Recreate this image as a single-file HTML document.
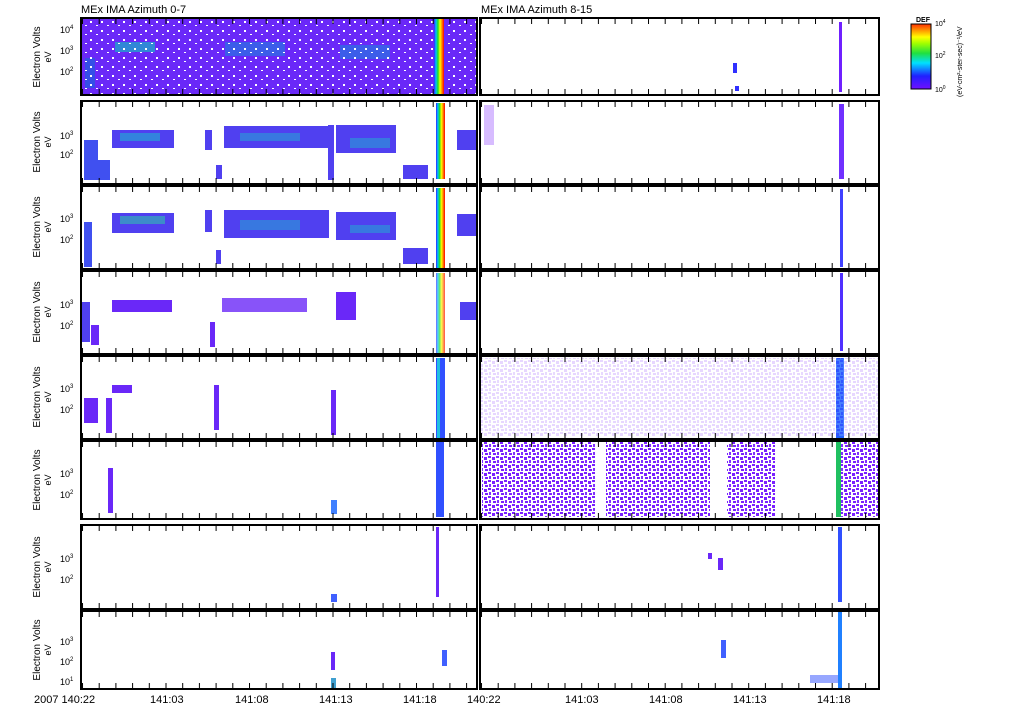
<!DOCTYPE html>
<html><head><meta charset="utf-8"><style>
html,body{margin:0;padding:0;background:#fff;}
svg{display:block;font-family:"Liberation Sans",sans-serif;}
</style></head><body>
<svg width="1024" height="708" viewBox="0 0 1024 708" xmlns="http://www.w3.org/2000/svg">
<defs>
<linearGradient id="rb" x1="0" y1="0" x2="1" y2="0">
<stop offset="0" stop-color="#3020ff"/><stop offset="0.2" stop-color="#00c0ff"/><stop offset="0.4" stop-color="#20e020"/><stop offset="0.6" stop-color="#ffff00"/><stop offset="0.8" stop-color="#ff8000"/><stop offset="1" stop-color="#ff0000"/>
</linearGradient>
<linearGradient id="cb" x1="0" y1="1" x2="0" y2="0">
<stop offset="0" stop-color="#7010ff"/><stop offset="0.2" stop-color="#2020ff"/><stop offset="0.4" stop-color="#00e0ff"/><stop offset="0.55" stop-color="#20e040"/><stop offset="0.7" stop-color="#a0ff00"/><stop offset="0.8" stop-color="#ffff00"/><stop offset="1" stop-color="#ff3000"/>
</linearGradient>
<pattern id="tk" x="82" y="0" width="16.7" height="700" patternUnits="userSpaceOnUse">
<rect x="0" y="0" width="1" height="700" fill="#000"/>
</pattern>
<pattern id="dots" x="0" y="0" width="8" height="8" patternUnits="userSpaceOnUse">
<rect width="8" height="8" fill="#fff"/>
<rect x="0" y="0" width="3" height="2" fill="#7a20ff"/><rect x="4" y="1" width="3" height="3" fill="#7a20ff"/>
<rect x="1" y="4" width="2" height="3" fill="#8030ff"/><rect x="5" y="5" width="3" height="2" fill="#7a20ff"/>
</pattern>
<pattern id="wsp" x="0" y="0" width="11" height="9" patternUnits="userSpaceOnUse">
<rect x="2" y="3" width="2" height="2" fill="#fff"/><rect x="8" y="7" width="2" height="1" fill="#fff"/>
</pattern>
</defs>

<text x="81" y="13" font-size="11">MEx IMA Azimuth 0-7</text>
<text x="481" y="13" font-size="11">MEx IMA Azimuth 8-15</text>

<!-- Row 1 -->
<g>
<rect x="82" y="19" width="395" height="75" fill="#6a28f8"/>
<rect x="115" y="42" width="40" height="10" fill="#1ab0c8" opacity="0.7"/>
<rect x="225" y="42" width="60" height="14" fill="#1e80e0" opacity="0.6"/>
<rect x="340" y="45" width="50" height="14" fill="#1e80e0" opacity="0.6"/>
<rect x="85" y="58" width="10" height="30" fill="#2060e0" opacity="0.7"/>
<rect x="82" y="19" width="395" height="75" fill="url(#wsp)"/>
<rect x="180" y="20" width="20" height="74" fill="url(#wsp)"/>
<rect x="300" y="20" width="25" height="74" fill="url(#wsp)"/>
<rect x="434" y="19" width="10" height="75" fill="url(#rb)"/>
<rect x="481" y="19" width="397" height="75" fill="#fff"/>
<rect x="733" y="63" width="4" height="10" fill="#3030ff"/>
<rect x="735" y="86" width="4" height="5" fill="#3030ff"/>
<rect x="839" y="22" width="3" height="70" fill="#7020ff"/>
</g>
<!-- Row 2 -->
<g>
<rect x="112" y="130" width="62" height="18" fill="#5040f0"/><rect x="120" y="133" width="40" height="8" fill="#20b0d0" opacity=".6"/>
<rect x="224" y="126" width="105" height="22" fill="#5040f0"/><rect x="240" y="133" width="60" height="8" fill="#20b0d0" opacity=".5"/>
<rect x="336" y="125" width="60" height="28" fill="#5040f0"/><rect x="350" y="138" width="40" height="10" fill="#20b0d0" opacity=".5"/>
<rect x="84" y="140" width="14" height="40" fill="#4050f0"/>
<rect x="96" y="160" width="14" height="20" fill="#4050f0"/>
<rect x="403" y="165" width="25" height="14" fill="#5040f0"/>
<rect x="205" y="130" width="7" height="20" fill="#5040f0"/>
<rect x="216" y="165" width="6" height="14" fill="#5040f0"/>
<rect x="328" y="125" width="6" height="55" fill="#5040f0"/>
<rect x="457" y="130" width="20" height="20" fill="#5040f0"/>
<rect x="436" y="103" width="9" height="76" fill="url(#rb)"/>
<rect x="484" y="105" width="10" height="40" fill="#7a20ff" opacity=".3"/>
<rect x="839" y="104" width="5" height="75" fill="#7030ff"/>
</g>
<!-- Row 3 -->
<g>
<rect x="112" y="213" width="62" height="20" fill="#5040f0"/><rect x="120" y="216" width="45" height="8" fill="#30c0b0" opacity=".6"/>
<rect x="224" y="210" width="105" height="28" fill="#5040f0"/><rect x="240" y="220" width="60" height="10" fill="#20b0d0" opacity=".5"/>
<rect x="336" y="212" width="60" height="28" fill="#5040f0"/><rect x="350" y="225" width="40" height="8" fill="#20b0d0" opacity=".5"/>
<rect x="84" y="222" width="8" height="45" fill="#4050f0"/>
<rect x="205" y="210" width="7" height="22" fill="#5040f0"/>
<rect x="216" y="250" width="5" height="14" fill="#5040f0"/>
<rect x="403" y="248" width="25" height="16" fill="#5040f0"/>
<rect x="457" y="214" width="20" height="22" fill="#5040f0"/>
<rect x="436" y="188" width="9" height="80" fill="url(#rb)"/>
<rect x="840" y="189" width="3" height="78" fill="#4040ff"/>
</g>
<!-- Row 4 -->
<g>
<rect x="112" y="300" width="60" height="12" fill="#6a28f8"/>
<rect x="222" y="298" width="85" height="14" fill="#6a28f8" opacity=".8"/>
<rect x="336" y="292" width="20" height="28" fill="#6a28f8"/>
<rect x="82" y="302" width="8" height="40" fill="#5040f0"/>
<rect x="91" y="325" width="8" height="20" fill="#6a28f8"/>
<rect x="210" y="322" width="5" height="25" fill="#6a28f8"/>
<rect x="436" y="273" width="9" height="80" fill="url(#rb)" opacity=".7"/>
<rect x="460" y="302" width="17" height="18" fill="#5040f0"/>
<rect x="840" y="273" width="3" height="78" fill="#5030ff"/>
</g>
<!-- Row 5 -->
<g>
<rect x="112" y="385" width="20" height="8" fill="#6a28f8"/>
<rect x="84" y="398" width="14" height="25" fill="#6a28f8"/>
<rect x="106" y="398" width="6" height="35" fill="#6a28f8"/>
<rect x="214" y="385" width="5" height="45" fill="#6a28f8"/>
<rect x="331" y="390" width="5" height="45" fill="#6a28f8"/>
<rect x="436" y="358" width="9" height="80" fill="#3050ff"/>
<rect x="437" y="358" width="3" height="80" fill="#20c0e0"/>
<rect x="836" y="358" width="8" height="80" fill="#2060ff"/>
<rect x="481" y="358" width="397" height="78" fill="url(#dots)" opacity=".18"/>
</g>
<!-- Row 6 -->
<g>
<rect x="482" y="442" width="114" height="75" fill="url(#dots)"/>
<rect x="606" y="442" width="104" height="75" fill="url(#dots)"/>
<rect x="727" y="442" width="48" height="75" fill="url(#dots)"/>
<rect x="837" y="442" width="42" height="75" fill="url(#dots)"/>
<rect x="836" y="442" width="5" height="75" fill="#20c060"/>
<rect x="108" y="468" width="5" height="45" fill="#6a28f8"/>
<rect x="331" y="500" width="6" height="14" fill="#4080ff"/>
<rect x="436" y="442" width="8" height="75" fill="#3050ff"/>
</g>
<!-- Row 7 -->
<g>
<rect x="436" y="527" width="3" height="70" fill="#6a28f8"/>
<rect x="331" y="594" width="6" height="8" fill="#4060ff"/>
<rect x="838" y="527" width="4" height="75" fill="#3050ff"/>
<rect x="708" y="553" width="4" height="6" fill="#6a28f8"/>
<rect x="718" y="558" width="5" height="12" fill="#6a28f8"/>
</g>
<!-- Row 8 -->
<g>
<rect x="331" y="652" width="4" height="18" fill="#6a28f8"/>
<rect x="331" y="678" width="5" height="10" fill="#40a0d0"/>
<rect x="442" y="650" width="5" height="16" fill="#4060ff"/>
<rect x="721" y="640" width="5" height="18" fill="#4060ff"/>
<rect x="810" y="675" width="28" height="8" fill="#3050ff" opacity=".5"/>
<rect x="838" y="612" width="4" height="76" fill="#2080ff"/>
</g>

<!-- Frames -->
<g fill="none" stroke="#000" stroke-width="2">
<rect x="81" y="18" width="396" height="77"/><rect x="480" y="18" width="399" height="77"/>
<rect x="81" y="101" width="396" height="83"/><rect x="480" y="101" width="399" height="83"/>
<rect x="81" y="186" width="396" height="83"/><rect x="480" y="186" width="399" height="83"/>
<rect x="81" y="271" width="396" height="83"/><rect x="480" y="271" width="399" height="83"/>
<rect x="81" y="356" width="396" height="83"/><rect x="480" y="356" width="399" height="83"/>
<rect x="81" y="441" width="396" height="78"/><rect x="480" y="441" width="399" height="78"/>
<rect x="81" y="525" width="396" height="84"/><rect x="480" y="525" width="399" height="84"/>
<rect x="81" y="611" width="396" height="78"/><rect x="480" y="611" width="399" height="78"/>
</g>
<!-- tick bands -->
<g fill="url(#tk)">
<rect x="82" y="19" width="395" height="5"/><rect x="82" y="89" width="395" height="5"/>
<rect x="82" y="102" width="395" height="5"/><rect x="82" y="178" width="395" height="5"/>
<rect x="82" y="187" width="395" height="5"/><rect x="82" y="263" width="395" height="5"/>
<rect x="82" y="272" width="395" height="5"/><rect x="82" y="348" width="395" height="5"/>
<rect x="82" y="357" width="395" height="5"/><rect x="82" y="433" width="395" height="5"/>
<rect x="82" y="442" width="395" height="5"/><rect x="82" y="513" width="395" height="5"/>
<rect x="82" y="526" width="395" height="5"/><rect x="82" y="603" width="395" height="5"/>
<rect x="82" y="612" width="395" height="5"/><rect x="82" y="683" width="395" height="5"/>
</g>
<g fill="url(#tk)" transform="translate(399,0)">
<rect x="82" y="19" width="398" height="5"/><rect x="82" y="89" width="398" height="5"/>
<rect x="82" y="102" width="398" height="5"/><rect x="82" y="178" width="398" height="5"/>
<rect x="82" y="187" width="398" height="5"/><rect x="82" y="263" width="398" height="5"/>
<rect x="82" y="272" width="398" height="5"/><rect x="82" y="348" width="398" height="5"/>
<rect x="82" y="357" width="398" height="5"/><rect x="82" y="433" width="398" height="5"/>
<rect x="82" y="442" width="398" height="5"/><rect x="82" y="513" width="398" height="5"/>
<rect x="82" y="526" width="398" height="5"/><rect x="82" y="603" width="398" height="5"/>
<rect x="82" y="612" width="398" height="5"/><rect x="82" y="683" width="398" height="5"/>
</g>

<!-- Y labels -->
<g font-size="9">
<text x="60" y="33">10<tspan font-size="6" dy="-4">4</tspan></text>
<text x="60" y="54">10<tspan font-size="6" dy="-4">3</tspan></text>
<text x="60" y="75">10<tspan font-size="6" dy="-4">2</tspan></text>
<text x="60" y="139">10<tspan font-size="6" dy="-4">3</tspan></text>
<text x="60" y="158">10<tspan font-size="6" dy="-4">2</tspan></text>
<text x="60" y="222">10<tspan font-size="6" dy="-4">3</tspan></text>
<text x="60" y="243">10<tspan font-size="6" dy="-4">2</tspan></text>
<text x="60" y="308">10<tspan font-size="6" dy="-4">3</tspan></text>
<text x="60" y="329">10<tspan font-size="6" dy="-4">2</tspan></text>
<text x="60" y="392">10<tspan font-size="6" dy="-4">3</tspan></text>
<text x="60" y="413">10<tspan font-size="6" dy="-4">2</tspan></text>
<text x="60" y="477">10<tspan font-size="6" dy="-4">3</tspan></text>
<text x="60" y="498">10<tspan font-size="6" dy="-4">2</tspan></text>
<text x="60" y="562">10<tspan font-size="6" dy="-4">3</tspan></text>
<text x="60" y="583">10<tspan font-size="6" dy="-4">2</tspan></text>
<text x="60" y="645">10<tspan font-size="6" dy="-4">3</tspan></text>
<text x="60" y="665">10<tspan font-size="6" dy="-4">2</tspan></text>
<text x="60" y="685">10<tspan font-size="6" dy="-4">1</tspan></text>
</g>
<g font-size="10" text-anchor="middle">
<g transform="translate(40,57) rotate(-90)"><text>Electron Volts</text><text y="11" font-size="9">eV</text></g>
<g transform="translate(40,142) rotate(-90)"><text>Electron Volts</text><text y="11" font-size="9">eV</text></g>
<g transform="translate(40,227) rotate(-90)"><text>Electron Volts</text><text y="11" font-size="9">eV</text></g>
<g transform="translate(40,312) rotate(-90)"><text>Electron Volts</text><text y="11" font-size="9">eV</text></g>
<g transform="translate(40,397) rotate(-90)"><text>Electron Volts</text><text y="11" font-size="9">eV</text></g>
<g transform="translate(40,480) rotate(-90)"><text>Electron Volts</text><text y="11" font-size="9">eV</text></g>
<g transform="translate(40,567) rotate(-90)"><text>Electron Volts</text><text y="11" font-size="9">eV</text></g>
<g transform="translate(40,650) rotate(-90)"><text>Electron Volts</text><text y="11" font-size="9">eV</text></g>
</g>

<!-- X labels -->
<g font-size="11">
<text x="34" y="703">2007 140:22</text>
<text x="150" y="703">141:03</text>
<text x="235" y="703">141:08</text>
<text x="319" y="703">141:13</text>
<text x="403" y="703">141:18</text>
<text x="467" y="703">140:22</text>
<text x="565" y="703">141:03</text>
<text x="649" y="703">141:08</text>
<text x="733" y="703">141:13</text>
<text x="817" y="703">141:18</text>
</g>

<!-- Colorbar -->
<text x="916" y="22" font-size="7" font-weight="bold">DEF</text>
<rect x="911" y="24" width="20" height="65" fill="url(#cb)" stroke="#000" stroke-width="1"/>
<g font-size="7"><text x="935" y="26">10<tspan dy="-3" font-size="5">4</tspan></text>
<text x="935" y="58">10<tspan dy="-3" font-size="5">2</tspan></text>
<text x="935" y="92">10<tspan dy="-3" font-size="5">0</tspan></text></g>
<text transform="translate(962,97) rotate(-90)" font-size="7">(eV-cm²-ster-sec)⁻¹/eV</text>
</svg>
</body></html>
